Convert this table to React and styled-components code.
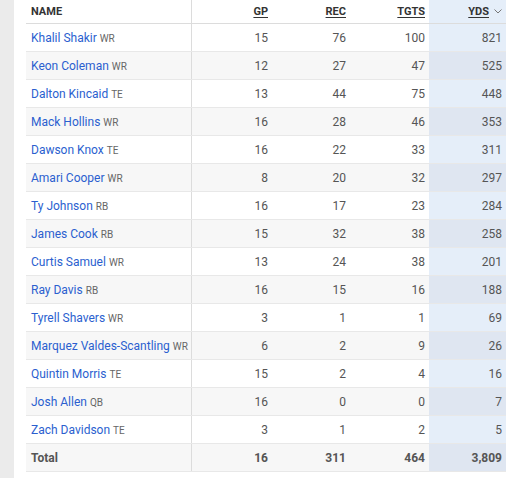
import React from "react";
import styled, { createGlobalStyle } from "styled-components";

const Global = createGlobalStyle`
  html, body { margin: 0; padding: 0; background: #fff; }
  body { font-family: Roboto, "Liberation Sans", Arial, sans-serif; }
`;

const Page = styled.div`
  display: flex;
  width: 515px;
  height: 478px;
  background: #fff;
`;

const Sidebar = styled.div`
  width: 14px;
  flex: none;
  background: #ebebeb;
`;

const Main = styled.div`
  padding-left: 12px;
`;

const Table = styled.table`
  border-collapse: collapse;
  table-layout: fixed;
  width: 480px;
  font-size: 12px;
`;

const Th = styled.th`
  height: 23px;
  padding: 0 ${(p) => (p.$first ? "5px" : "4px")};
  text-align: ${(p) => (p.$first ? "left" : "right")};
  font-size: 11px;
  font-weight: 700;
  color: #333;
  text-transform: uppercase;
  text-decoration: ${(p) => (p.$sort ? "underline" : "none")};
  text-underline-offset: 2px;
  border-bottom: 1px solid #dcdcdc;
  border-right: ${(p) => (p.$first ? "1px solid #dcdcdc" : "none")};
  background: ${(p) => (p.$hl ? "#e5eef9" : "#fff")};
  white-space: nowrap;
`;

const Chevron = styled.svg`
  margin-left: 5px;
  vertical-align: 1px;
`;

const Tr = styled.tr`
  height: 28px;
  background: ${(p) => (p.$stripe ? "#f7f7f7" : "#fff")};
`;

const Td = styled.td`
  padding: 0 ${(p) => (p.$first ? "5px" : "4px")};
  text-align: ${(p) => (p.$first ? "left" : "right")};
  color: #555;
  font-weight: ${(p) => (p.$total ? 700 : 400)};
  border-bottom: 1px solid #e8e8e8;
  border-right: ${(p) => (p.$first ? "1px solid #dcdcdc" : "none")};
  background: ${(p) =>
    p.$hl ? (p.$stripe ? "#dfe6f1" : "#e5eef9") : "transparent"};
  white-space: nowrap;
  overflow: hidden;
`;

const Name = styled.a`
  color: #2b5fcf;
  text-decoration: none;
`;

const Pos = styled.span`
  color: #666;
  font-size: 10px;
  margin-left: 3px;
`;

const rows = [
  ["Khalil Shakir", "WR", 15, 76, 100, "821"],
  ["Keon Coleman", "WR", 12, 27, 47, "525"],
  ["Dalton Kincaid", "TE", 13, 44, 75, "448"],
  ["Mack Hollins", "WR", 16, 28, 46, "353"],
  ["Dawson Knox", "TE", 16, 22, 33, "311"],
  ["Amari Cooper", "WR", 8, 20, 32, "297"],
  ["Ty Johnson", "RB", 16, 17, 23, "284"],
  ["James Cook", "RB", 15, 32, 38, "258"],
  ["Curtis Samuel", "WR", 13, 24, 38, "201"],
  ["Ray Davis", "RB", 16, 15, 16, "188"],
  ["Tyrell Shavers", "WR", 3, 1, 1, "69"],
  ["Marquez Valdes-Scantling", "WR", 6, 2, 9, "26"],
  ["Quintin Morris", "TE", 15, 2, 4, "16"],
  ["Josh Allen", "QB", 16, 0, 0, "7"],
  ["Zach Davidson", "TE", 3, 1, 2, "5"],
];

export default function App() {
  return (
    <>
      <Global />
      <Page>
        <Sidebar />
        <Main>
          <Table>
            <colgroup>
              <col style={{ width: 165 }} />
              <col style={{ width: 81 }} />
              <col style={{ width: 78 }} />
              <col style={{ width: 79 }} />
              <col style={{ width: 77 }} />
            </colgroup>
            <thead>
              <tr>
                <Th $first>Name</Th>
                <Th $sort>GP</Th>
                <Th $sort>REC</Th>
                <Th $sort>TGTS</Th>
                <Th $hl>
                  <u>YDS</u>
                  <Chevron width="8" height="5" viewBox="0 0 8 5">
                    <path d="M0.5 0.5 L4 4 L7.5 0.5" fill="none" stroke="#777" strokeWidth="1" />
                  </Chevron>
                </Th>
              </tr>
            </thead>
            <tbody>
              {rows.map((r, i) => {
                const s = i % 2 === 1;
                return (
                  <Tr key={r[0]} $stripe={s}>
                    <Td $first>
                      <Name>{r[0]}</Name>
                      <Pos>{r[1]}</Pos>
                    </Td>
                    <Td>{r[2]}</Td>
                    <Td>{r[3]}</Td>
                    <Td>{r[4]}</Td>
                    <Td $hl $stripe={s}>{r[5]}</Td>
                  </Tr>
                );
              })}
              <Tr $stripe>
                <Td $first $total>Total</Td>
                <Td $total>16</Td>
                <Td $total>311</Td>
                <Td $total>464</Td>
                <Td $total $hl $stripe>3,809</Td>
              </Tr>
            </tbody>
          </Table>
        </Main>
      </Page>
    </>
  );
}
